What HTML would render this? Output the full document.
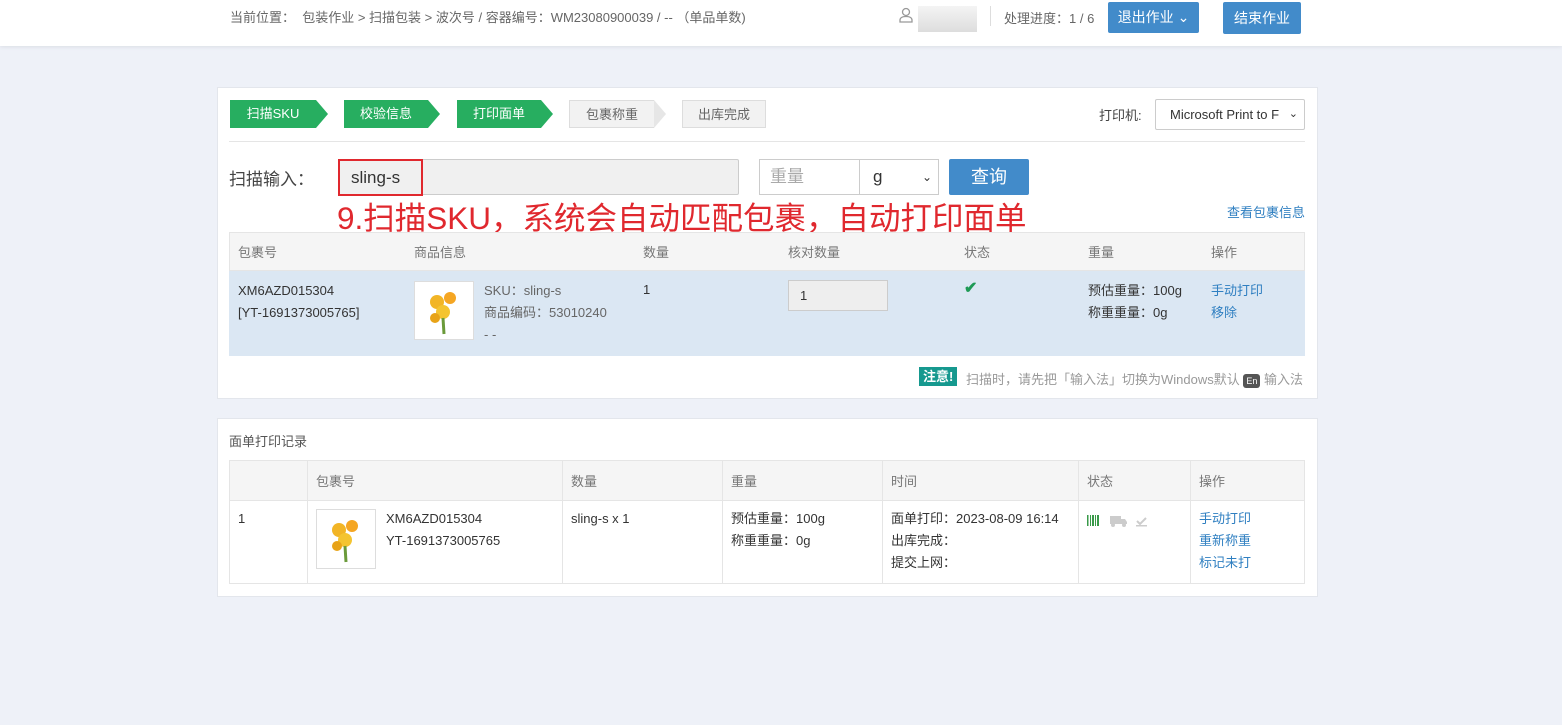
<!DOCTYPE html>
<html><head><meta charset="utf-8">
<style>
*{box-sizing:border-box;margin:0;padding:0}
body{width:1562px;height:725px;background:#eef1f8;font-family:"Liberation Sans","Noto Sans CJK SC",sans-serif;font-size:13px;color:#555;position:relative;overflow:hidden}
.abs{position:absolute}
.top{left:0;top:0;width:1562px;height:46px;background:#fff;box-shadow:0 1px 4px rgba(0,0,0,.08)}
.btn{background:#428bca;color:#fff;border-radius:2px;text-align:center;font-size:14px}
.panel{background:#fff;border:1px solid #e3e6ec}
.step{height:28px;line-height:28px;font-size:13px;text-align:center}
.g{background:#27ae60;color:#fff}
.gr{background:#f2f2f2;color:#666;border:1px solid #ddd}
.arrow{width:0;height:0;border-top:14px solid transparent;border-bottom:14px solid transparent}
table{border-collapse:collapse}
.link{color:#2f7fc1}
</style></head><body>
<div class="abs top"></div>
<div class="abs" style="left:230px;top:7px;font-size:13px;color:#666">当前位置：&nbsp; 包装作业 &gt; 扫描包装 &gt; 波次号 / 容器编号：WM23080900039 / -- （单品单数)</div>
<svg class="abs" style="left:898px;top:7px" width="16" height="16" viewBox="0 0 16 16"><circle cx="8" cy="5" r="3.5" fill="none" stroke="#999" stroke-width="1.3"/><path d="M2 15v-2c0-2 2-3.5 6-3.5s6 1.5 6 3.5v2z" fill="none" stroke="#999" stroke-width="1.3"/></svg>
<div class="abs" style="left:918px;top:6px;width:59px;height:26px;background:linear-gradient(#f4f4f4,#ddd)"></div>
<div class="abs" style="left:990px;top:6px;width:1px;height:20px;background:#ddd"></div>
<div class="abs" style="left:1004px;top:8px;color:#666">处理进度：1 / 6</div>
<div class="abs btn" style="left:1108px;top:2px;width:91px;height:31px;line-height:31px">退出作业 ⌄</div>
<div class="abs btn" style="left:1223px;top:2px;width:78px;height:32px;line-height:32px">结束作业</div>

<div class="abs panel" style="left:217px;top:87px;width:1101px;height:312px"></div>
<div class="abs step g" style="left:230px;top:100px;width:86px">扫描SKU</div><div class="abs arrow" style="left:316px;top:100px;border-left:12px solid #27ae60"></div>
<div class="abs step g" style="left:344px;top:100px;width:84px">校验信息</div><div class="abs arrow" style="left:428px;top:100px;border-left:12px solid #27ae60"></div>
<div class="abs step g" style="left:457px;top:100px;width:84px">打印面单</div><div class="abs arrow" style="left:541px;top:100px;border-left:12px solid #27ae60"></div>
<div class="abs step gr" style="left:569px;top:100px;width:85px;border-right:none">包裹称重</div><div class="abs arrow" style="left:654px;top:100px;border-left:12px solid #e6e6e6"></div>
<div class="abs step gr" style="left:682px;top:100px;width:84px">出库完成</div>
<div class="abs" style="left:1099px;top:105px;color:#444">打印机:</div>
<div class="abs" style="left:1155px;top:99px;width:150px;height:31px;border:1px solid #ccc;border-radius:2px;line-height:29px;padding-left:14px;color:#333;font-size:13px">Microsoft Print to F<span style="position:absolute;right:6px;font-size:11px">⌄</span></div>
<div class="abs" style="left:229px;top:141px;width:1076px;height:1px;background:#e5e5e5"></div>

<div class="abs" style="left:229px;top:165px;font-size:17px;color:#444">扫描输入：</div>
<div class="abs" style="left:338px;top:159px;width:401px;height:36px;background:#f0f0f0;border:1px solid #ccc;border-radius:2px"></div>
<div class="abs" style="left:338px;top:159px;width:85px;height:37px;border:2px solid #e0282e;font-size:17px;color:#333;line-height:33px;padding-left:11px">sling-s</div>
<div class="abs" style="left:759px;top:159px;width:101px;height:36px;border:1px solid #ccc;font-size:17px;color:#aaa;line-height:34px;padding-left:10px">重量</div>
<div class="abs" style="left:859px;top:159px;width:80px;height:36px;border:1px solid #ccc;font-size:17px;color:#333;line-height:34px;padding-left:13px">g<span style="position:absolute;right:6px;font-size:12px">⌄</span></div>
<div class="abs btn" style="left:949px;top:159px;width:80px;height:36px;line-height:36px;font-size:18px">查询</div>
<div class="abs" style="left:337px;top:197px;font-size:31.5px;color:#e0282e;line-height:42px;white-space:nowrap">9.扫描SKU，系统会自动匹配包裹，自动打印面单</div>
<div class="abs link" style="left:1227px;top:202px">查看包裹信息</div>

<div class="abs" style="left:229px;top:232px;width:1076px;height:39px;background:#f5f5f5;border:1px solid #e5e5e5"></div>
<div class="abs" style="left:229px;top:271px;width:1076px;height:85px;background:#dbe7f3"></div>
<div class="abs" style="top:242px;left:238px;color:#777">包裹号</div>
<div class="abs" style="top:242px;left:414px;color:#777">商品信息</div>
<div class="abs" style="top:242px;left:643px;color:#777">数量</div>
<div class="abs" style="top:242px;left:788px;color:#777">核对数量</div>
<div class="abs" style="top:242px;left:964px;color:#777">状态</div>
<div class="abs" style="top:242px;left:1088px;color:#777">重量</div>
<div class="abs" style="top:242px;left:1211px;color:#777">操作</div>
<div class="abs" style="top:280px;left:238px;line-height:22px;color:#333">XM6AZD015304<br>[YT-1691373005765]</div>
<div class="abs" style="top:281px;left:414px;width:60px;height:59px;background:#fff;border:1px solid #ddd"><svg width="58" height="57"><circle cx="22" cy="20" r="7" fill="#f2b526"/><circle cx="35" cy="16" r="6" fill="#f5a623"/><circle cx="28" cy="30" r="7" fill="#f4c430"/><circle cx="20" cy="36" r="5" fill="#e8a317"/><path d="M28 36 L29 52" stroke="#6a9a3a" stroke-width="3"/></svg></div>
<div class="abs" style="top:280px;left:484px;line-height:22px;color:#666">SKU：sling-s<br>商品编码：53010240<br>- -</div>
<div class="abs" style="top:282px;left:643px;color:#333">1</div>
<div class="abs" style="top:280px;left:788px;width:100px;height:31px;background:#eee;border:1px solid #ccc;line-height:29px;padding-left:11px;color:#333">1</div>
<div class="abs" style="top:278px;left:964px;color:#1e9a55;font-size:16px;font-weight:bold">✔</div>
<div class="abs" style="top:280px;left:1088px;line-height:22px;color:#333">预估重量：100g<br>称重重量：0g</div>
<div class="abs link" style="top:280px;left:1211px;line-height:22px">手动打印<br>移除</div>
<div class="abs" style="top:367px;left:919px;background:#16998f;color:#fff;font-weight:bold;padding:0 4px;height:19px;line-height:19px">注意!</div>
<div class="abs" style="top:369px;left:966px;color:#999">扫描时，请先把「输入法」切换为Windows默认 <span style="background:#555;color:#fff;font-size:9px;padding:2px 3px;border-radius:3px">En</span> 输入法</div>

<div class="abs panel" style="left:217px;top:418px;width:1101px;height:179px"></div>
<div class="abs" style="left:229px;top:431px;color:#555">面单打印记录</div>
<table class="abs" style="left:229px;top:460px;width:1076px;font-size:13px">
<tr style="height:40px;background:#f5f5f5;color:#777"><td style="width:78px;border:1px solid #e5e5e5"></td><td style="width:255px;border:1px solid #e5e5e5;padding-left:8px">包裹号</td><td style="width:160px;border:1px solid #e5e5e5;padding-left:8px">数量</td><td style="width:160px;border:1px solid #e5e5e5;padding-left:8px">重量</td><td style="width:196px;border:1px solid #e5e5e5;padding-left:8px">时间</td><td style="width:112px;border:1px solid #e5e5e5;padding-left:8px">状态</td><td style="border:1px solid #e5e5e5;padding-left:8px">操作</td></tr>
<tr style="height:83px;vertical-align:top;color:#333;line-height:22px"><td style="border:1px solid #e5e5e5;padding:7px 8px">1</td>
<td style="border:1px solid #e5e5e5;padding:7px 8px"><div style="float:left;width:60px;height:60px;border:1px solid #ddd;margin-right:10px;margin-top:1px"><svg width="58" height="58"><circle cx="22" cy="20" r="7" fill="#f2b526"/><circle cx="35" cy="16" r="6" fill="#f5a623"/><circle cx="28" cy="30" r="7" fill="#f4c430"/><circle cx="20" cy="36" r="5" fill="#e8a317"/><path d="M28 36 L29 52" stroke="#6a9a3a" stroke-width="3"/></svg></div>XM6AZD015304<br>YT-1691373005765</td>
<td style="border:1px solid #e5e5e5;padding:7px 8px">sling-s x 1</td>
<td style="border:1px solid #e5e5e5;padding:7px 8px">预估重量：100g<br>称重重量：0g</td>
<td style="border:1px solid #e5e5e5;padding:7px 8px">面单打印：2023-08-09 16:14<br>出库完成：<br>提交上网：</td>
<td style="border:1px solid #e5e5e5;padding:7px 8px"><svg width="70" height="20" style="margin-top:3px"><g fill="#3a9a4a"><rect x="0" y="4" width="1.5" height="11"/><rect x="3" y="4" width="1" height="11"/><rect x="5" y="4" width="2" height="11"/><rect x="8" y="4" width="1" height="11"/><rect x="10" y="4" width="2" height="11"/></g><g fill="#ccc"><rect x="23" y="5" width="11" height="8"/><path d="M34 8h4l2 3v2h-6z"/><circle cx="26" cy="14" r="2"/><circle cx="37" cy="14" r="2"/><path d="M50 10l3 3 6-6" stroke="#ccc" stroke-width="2" fill="none"/><rect x="49" y="14" width="11" height="1.5"/></g></svg></td>
<td style="border:1px solid #e5e5e5;padding:7px 8px" class="link">手动打印<br>重新称重<br>标记未打</td></tr>
</table>
</body></html>
